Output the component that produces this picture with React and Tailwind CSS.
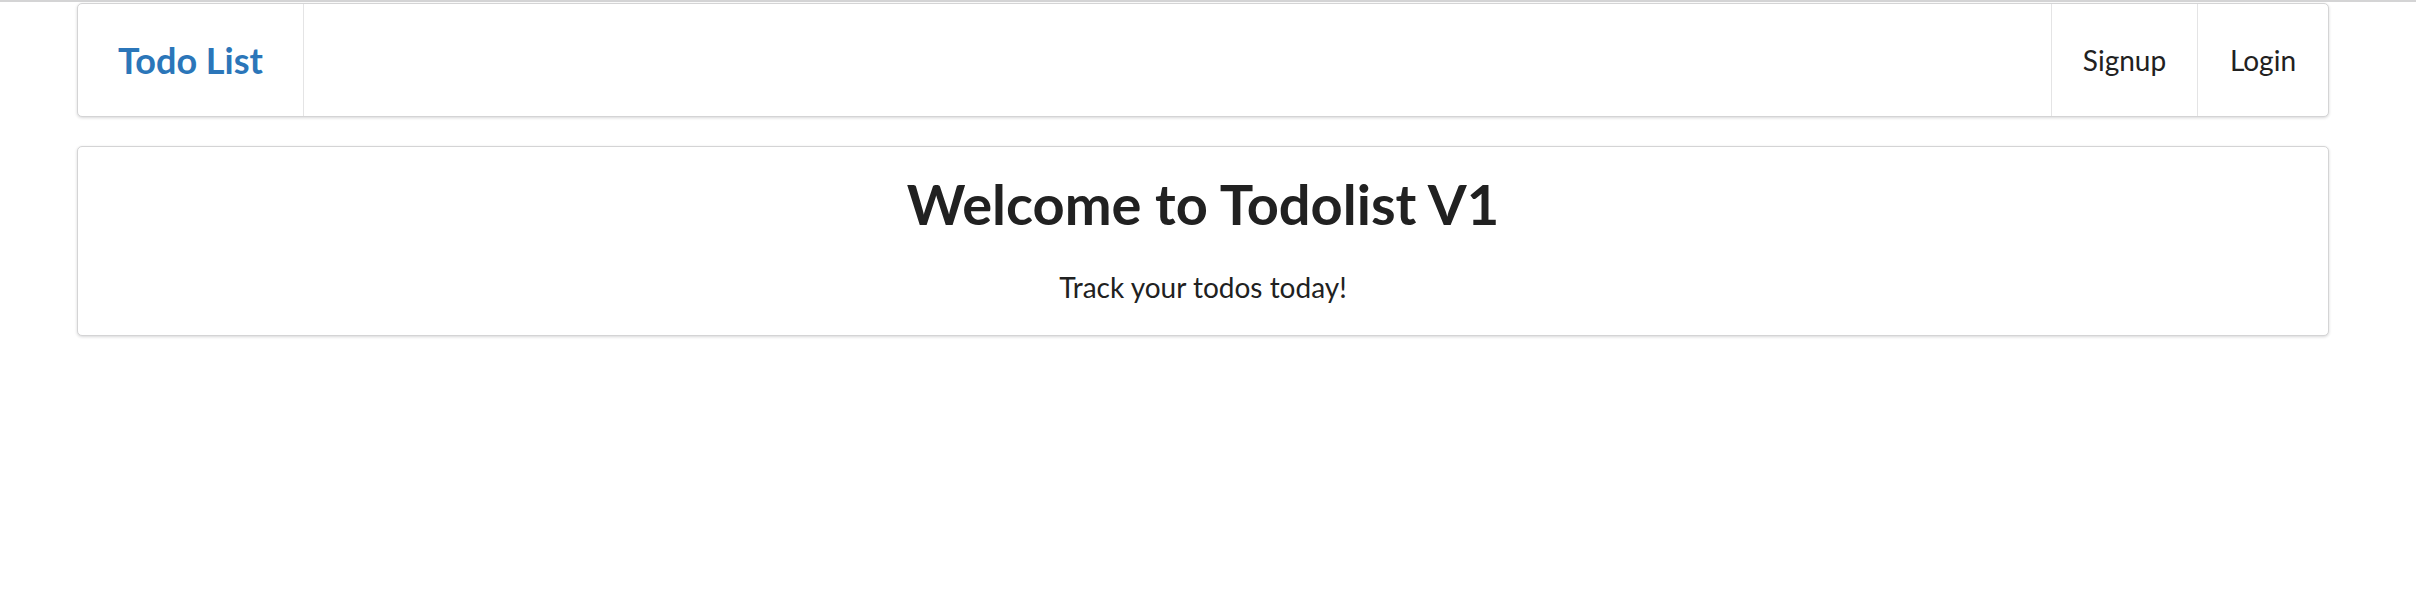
import React from "react";

export default function App() {
  return (
    <div className="min-h-[594px] bg-white font-['Lato','Noto_Sans',sans-serif] text-[#212121]">
      <div className="h-[2px] bg-[#d4d4d5]" />
      <div className="ml-[77px] w-[2252px] pt-[1px]">
        <nav className="flex h-[114px] items-stretch rounded-[5px] border border-[#d4d4d5] bg-white shadow-[0_1px_3px_0_rgba(34,36,38,0.18)]">
          <div className="flex w-[226px] items-center justify-center border-r border-[#e4e4e5] text-[36px] font-bold text-[#2b76b9]">
            Todo List
          </div>
          <div className="flex-1" />
          <div className="flex w-[146px] items-center justify-center border-l border-[#e4e4e5] text-[28px]">
            Signup
          </div>
          <div className="flex w-[131px] items-center justify-center border-l border-[#e4e4e5] text-[28px]">
            Login
          </div>
        </nav>
        <div className="mt-[29px] flex h-[190px] flex-col items-center rounded-[5px] border border-[#d4d4d5] bg-white pt-[29px] shadow-[0_1px_3px_0_rgba(34,36,38,0.18)]">
          <h1 className="text-[56px] font-bold leading-none">Welcome to Todolist V1</h1>
          <p className="mt-[41px] text-[28px] leading-none">Track your todos today!</p>
        </div>
      </div>
    </div>
  );
}
